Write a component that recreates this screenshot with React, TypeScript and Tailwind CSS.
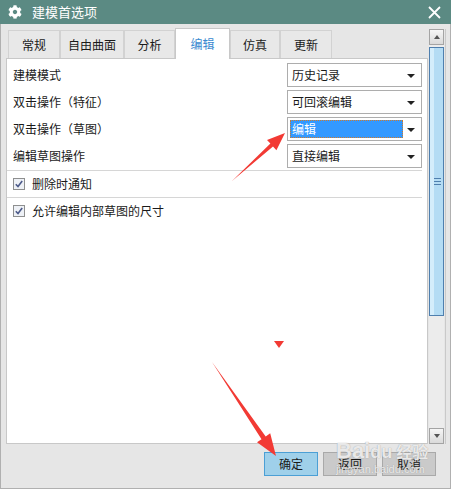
import React from "react";
import { FaCog } from "react-icons/fa";

const font = { fontFamily: '"Noto Sans CJK SC", "Noto Sans", sans-serif' };

function Select({ text, active }: { text: string; active?: boolean }) {
  return (
    <div className="w-[135px] h-[24px] border border-[#adadad] bg-white flex items-center relative">
      {active ? (
        <div className="ml-[2px] w-[113px] h-[18px] bg-[#3399ff] border border-dotted border-[#d07a2a] text-white text-[12px] leading-[16px] pl-[1px]">
          {text}
        </div>
      ) : (
        <span className="pl-[4px] text-[12px] text-[#1a1a1a] leading-none">{text}</span>
      )}
      <span className="absolute right-[6px] top-[10px] w-0 h-0 border-l-[4px] border-r-[4px] border-t-[4px] border-l-transparent border-r-transparent border-t-[#222]" />
    </div>
  );
}

function Row({ label, value, active }: { label: string; value: string; active?: boolean }) {
  return (
    <div className="flex items-center justify-between h-[24px]">
      <span className="text-[12px] text-[#1a1a1a]">{label}</span>
      <Select text={value} active={active} />
    </div>
  );
}

function Check({ label }: { label: string }) {
  return (
    <div className="h-[26px] flex items-center">
      <div className="w-[12px] h-[12px] border border-[#8e8f8f] bg-[#eef1f6] flex items-center justify-center">
        <svg width="10" height="10" viewBox="0 0 10 10">
          <path d="M1.8 5.2 L4 7.6 L8.2 2" fill="none" stroke="#4d5b8a" strokeWidth="1.6" />
        </svg>
      </div>
      <span className="ml-[7px] text-[12px] text-[#1a1a1a]">{label}</span>
    </div>
  );
}

const tabs: { t: string; w: string; active?: boolean }[] = [
  { t: "常规", w: "w-[52px]" },
  { t: "自由曲面", w: "w-[64px]" },
  { t: "分析", w: "w-[51px]" },
  { t: "编辑", w: "w-[55px]", active: true },
  { t: "仿真", w: "w-[50px]" },
  { t: "更新", w: "w-[52px]" },
];

export default function App() {
  return (
    <div className="w-[451px] h-[489px] relative overflow-hidden bg-[#e6e6e6]" style={font}>
      {/* title bar */}
      <div className="h-[24px] bg-[#5b8a83] flex items-center">
        <FaCog className="ml-[8px] text-white" size={14} />
        <span className="ml-[10px] text-[13px] text-white">建模首选项</span>
        <svg className="ml-auto mr-[10px]" width="13" height="13" viewBox="0 0 13 13">
          <path d="M1 1 L12 12 M12 1 L1 12" stroke="white" strokeWidth="1.8" />
        </svg>
      </div>

      <div className="h-[465px] border-l border-r border-b border-[#b0b0b0] flex flex-col">
        <div className="h-[420px] flex pt-[5px]">
          {/* tabs + panel */}
          <div className="ml-[5px] w-[422px] flex flex-col">
            <div className="h-[29px] pl-[2px] flex items-end">
              {tabs.map((tab) =>
                tab.active ? (
                  <div
                    key={tab.t}
                    className={`${tab.w} h-[31px] -mb-px relative z-10 bg-white border border-b-0 border-[#c8c8c8] flex items-center justify-center text-[12px] text-[#3a8ad0]`}
                  >
                    {tab.t}
                  </div>
                ) : (
                  <div
                    key={tab.t}
                    className={`${tab.w} h-[28px] bg-[#e8e8e8] border border-b-0 border-[#d2d2d2] flex items-center justify-center text-[12px] text-[#1a1a1a]`}
                  >
                    {tab.t}
                  </div>
                )
              )}
            </div>
            <div className="flex-1 bg-white border border-[#c8c8c8] pt-[4px]">
              <div className="pl-[6px] pr-[5px] flex flex-col gap-[3px]">
                <Row label="建模模式" value="历史记录" />
                <Row label="双击操作（特征）" value="可回滚编辑" />
                <Row label="双击操作（草图）" value="编辑" active />
                <Row label="编辑草图操作" value="直接编辑" />
              </div>
              <div className="mt-[2px] mr-[5px] h-px bg-[#d6d6d6]" />
              <div className="pl-[6px]">
                <Check label="删除时通知" />
              </div>
              <div className="mr-[5px] h-px bg-[#d6d6d6]" />
              <div className="pl-[6px]">
                <Check label="允许编辑内部草图的尺寸" />
              </div>
            </div>
          </div>

          {/* scrollbar */}
          <div className="ml-[1px] w-[15px] h-[415px] flex flex-col bg-[#ececec]">
            <div className="h-[16px] border border-[#a4a4a4] bg-gradient-to-b from-[#f6f6f6] to-[#dadada] flex items-center justify-center">
              <span className="w-0 h-0 border-l-[3px] border-r-[3px] border-b-[4px] border-l-transparent border-r-transparent border-b-[#555]" />
            </div>
            <div className="mt-[2px] h-[269px] border border-[#4f7fae] bg-[#b4dcf4] flex">
              <div className="w-[4px] h-full bg-[#d4edfb]" />
              <div className="flex-1 flex items-center justify-start">
                <div className="flex flex-col gap-[2px]">
                  <div className="w-[7px] h-px bg-[#4f7fae]" />
                  <div className="w-[7px] h-px bg-[#4f7fae]" />
                  <div className="w-[7px] h-px bg-[#4f7fae]" />
                </div>
              </div>
            </div>
            <div className="flex-1" />
            <div className="h-[16px] border border-[#a4a4a4] bg-gradient-to-b from-[#f6f6f6] to-[#dadada] flex items-center justify-center">
              <span className="w-0 h-0 border-l-[3px] border-r-[3px] border-t-[4px] border-l-transparent border-r-transparent border-t-[#555]" />
            </div>
          </div>
          <div className="ml-[1px] w-px h-[415px] bg-[#c9c9c9]" />
        </div>

        {/* footer */}
        <div className="flex-1 flex justify-end items-start pt-[8px] pr-[14px] gap-[5px]">
          <button className="w-[54px] h-[24px] bg-[#9fd0ea] border border-[#4b9fd5] text-[12px] text-[#1a1a1a]">确定</button>
          <button className="w-[54px] h-[24px] bg-[#cacaca] border border-[#a9a9a9] text-[12px] text-[#1a1a1a]">返回</button>
          <button className="w-[54px] h-[24px] bg-[#cacaca] border border-[#a9a9a9] text-[12px] text-[#1a1a1a]">取消</button>
        </div>
      </div>

      {/* watermark */}
      <div className="absolute left-[336px] top-[440px] text-white/80 pointer-events-none [text-shadow:0_0_1px_#8a8a8a] leading-none">
        <div className="text-[22px] font-bold" style={{ fontFamily: '"Liberation Sans", sans-serif' }}>
          Bai<span className="text-[18px]">du</span>
          <span className="text-[16px] ml-[4px]" style={font}>经验</span>
        </div>
        <div className="text-[11px] mt-[2px]" style={{ fontFamily: '"Liberation Sans", sans-serif' }}>jingyan.baidu.com</div>
      </div>

      {/* annotation arrows */}
      <svg className="absolute left-0 top-0 pointer-events-none" width="451" height="489">
        <polygon points="232,181 273,146.6 276.4,150.3 285,133 267,139.9 270.4,143.6" fill="#f23a34" />
        <polygon points="212,362 261.5,439.2 257,442.3 276,456 270.2,433.3 265.7,436.4" fill="#f23a34" />
        <polygon points="274,341 284,341 279,348" fill="#f23a34" />
      </svg>
    </div>
  );
}
